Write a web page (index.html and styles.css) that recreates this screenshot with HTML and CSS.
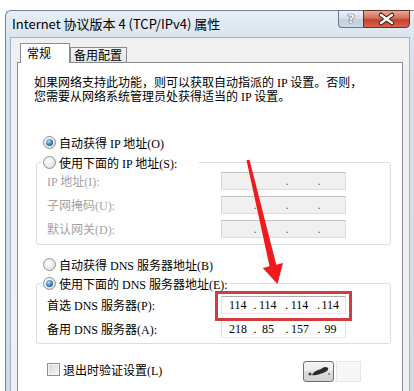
FILE: index.html
```html
<!DOCTYPE html>
<html lang="zh-CN">
<head>
    <meta charset="UTF-8">
    <meta name="viewport" content="width=device-width, initial-scale=1.0">
    <title>Internet 协议版本 4 (TCP/IPv4) 属性</title>
    <link rel="stylesheet" href="styles.css">
</head>
<body>
    <div class="window">
        <div class="titlebar">
            <span class="title">Internet 协议版本 4 (TCP/IPv4) 属性</span>
            <div class="caption">
                <span class="btn-help">?</span>
                <span class="btn-close">
                    <svg width="45" height="16" viewBox="0 0 45 16">
                        <path d="M17 4 L28 12 M28 4 L17 12" stroke="#3b1510" stroke-width="4.5" stroke-linecap="round"/>
                        <path d="M17 4 L28 12 M28 4 L17 12" stroke="#fff" stroke-width="2.6" stroke-linecap="round"/>
                    </svg>
                </span>
            </div>
        </div>
        <div class="client">
            <div class="tabs">
                <div class="tab active">常规</div>
                <div class="tab">备用配置</div>
            </div>
            <div class="page">
                <p class="intro">如果网络支持此功能，则可以获取自动指派的 IP 设置。否则，<br>您需要从网络系统管理员处获得适当的 IP 设置。</p>

                <div class="opt first"><span class="radio checked"></span>自动获得 IP 地址(O)</div>
                <fieldset class="group ip-group">
                    <legend class="opt"><span class="radio"></span>使用下面的 IP 地址(S):</legend>
                    <div class="row off">
                        <span class="label">IP 地址(I):</span>
                        <span class="ipbox off"><span class="seg"></span><span class="dot">.</span><span class="seg"></span><span class="dot">.</span><span class="seg"></span><span class="dot">.</span><span class="seg"></span></span>
                    </div>
                    <div class="row off">
                        <span class="label">子网掩码(U):</span>
                        <span class="ipbox off"><span class="seg"></span><span class="dot">.</span><span class="seg"></span><span class="dot">.</span><span class="seg"></span><span class="dot">.</span><span class="seg"></span></span>
                    </div>
                    <div class="row off">
                        <span class="label">默认网关(D):</span>
                        <span class="ipbox off"><span class="seg"></span><span class="dot">.</span><span class="seg"></span><span class="dot">.</span><span class="seg"></span><span class="dot">.</span><span class="seg"></span></span>
                    </div>
                </fieldset>

                <div class="opt dns-auto"><span class="radio"></span>自动获得 DNS 服务器地址(B)</div>
                <fieldset class="group dns-group">
                    <legend class="opt"><span class="radio checked"></span>使用下面的 DNS 服务器地址(E):</legend>
                    <div class="row">
                        <span class="label">首选 DNS 服务器(P):</span>
                        <span class="ipbox"><span class="seg">114</span><span class="dot">.</span><span class="seg">114</span><span class="dot">.</span><span class="seg">114</span><span class="dot">.</span><span class="seg">114</span></span>
                    </div>
                    <div class="row">
                        <span class="label">备用 DNS 服务器(A):</span>
                        <span class="ipbox"><span class="seg">218</span><span class="dot">.</span><span class="seg">85</span><span class="dot">.</span><span class="seg">157</span><span class="dot">.</span><span class="seg">99</span></span>
                    </div>
                </fieldset>

                <div class="foot">
                    <span class="check-opt"><span class="checkbox"></span>退出时验证设置(L)</span>
                    <span class="buttons">
                        <span class="btn-smudge">
                            <svg width="29" height="19" viewBox="0 0 29 19">
                                <path d="M8 13 C10 9 14 8 17 7 C19 5 22 4 24 6 C25 8 22 10 19 11 C15 12 12 14 8 13 Z" fill="#2b2b2b"/>
                                <circle cx="6" cy="12" r="1.6" fill="#444"/>
                                <circle cx="25" cy="12" r="1" fill="#777"/>
                            </svg>
                        </span>
                        <span class="btn-ghost"></span>
                    </span>
                </div>

                <svg class="overlay" width="414" height="391" viewBox="0 0 414 391">
                    <rect x="216.5" y="292.5" width="134" height="27" fill="none" stroke="#d23c3e" stroke-width="3"/>
                    <polygon points="246.5,160.3 249.5,159.7 276.3,264.7 283,263 277.5,284 262.8,268 269.5,266.3" fill="#f2191c"/>
                </svg>
            </div>
        </div>
    </div>
</body>
</html>
```

FILE: styles.css
```css
body {
    margin: 0;
    width: 414px;
    height: 391px;
    overflow: hidden;
    background: #fff;
    font-family: "Liberation Serif", "Noto Sans CJK SC", serif;
    font-size: 12px;
    color: #000;
}
.window {
    display: flex;
    flex-direction: column;
    margin: 10px 0 0 5px;
    width: 409px;
    height: 381px;
    box-sizing: border-box;
    border: 1px solid #71839b;
    border-right: none;
    border-bottom: none;
    border-radius: 6px 0 0 0;
    background: linear-gradient(#e6edf5, #d5e1ee 40px, #cfdbe9);
}
.titlebar {
    display: flex;
    flex: none;
    height: 26px;
    padding: 0 4px 0 6px;
}
.title {
    font-family: "Noto Sans CJK SC", sans-serif;
    font-size: 13px;
    line-height: 16px;
    padding-top: 5px;
}
.caption {
    display: flex;
    margin-left: auto;
    margin-top: -1px;
    height: 18px;
}
.btn-help {
    width: 25px;
    height: 18px;
    box-sizing: border-box;
    border: 1px solid #66778f;
    border-right: none;
    border-radius: 0 0 0 4px;
    background: linear-gradient(#eef3f9, #d4dde9 50%, #c3cfdf 50%, #cbd7e6);
    color: #f6f8fb;
    font-family: "DejaVu Sans", sans-serif;
    font-weight: bold;
    font-size: 13px;
    line-height: 16px;
    text-align: center;
    text-shadow: 0 0 1px #44526a, 0 0 1px #44526a, 0 0 1px #44526a;
}
.btn-close {
    width: 47px;
    height: 18px;
    box-sizing: border-box;
    border: 1px solid #6b3026;
    border-radius: 0 0 4px 0;
    background: linear-gradient(#e9a895, #d46d57 45%, #c4412b 55%, #d4654c);
}
.btn-close svg {
    display: block;
}
.client {
    display: flex;
    flex-direction: column;
    flex: 1;
    min-height: 0;
    margin: 0 4px;
    border: 1px solid #a3b3c6;
    border-bottom: none;
    background: #f0f0f0;
    padding: 5px 6px 0;
}
.tabs {
    display: flex;
    flex: none;
    align-items: flex-end;
    height: 19px;
    padding-left: 3px;
}
.tab {
    box-sizing: border-box;
    height: 15px;
    width: 57px;
    padding-left: 3px;
    border: 1px solid #898c95;
    border-bottom: none;
    line-height: 13px;
    background: linear-gradient(#f5f5f5, #e4e4e4);
    font-family: "Noto Sans CJK SC", sans-serif;
}
.tab.active {
    position: relative;
    z-index: 1;
    width: 50px;
    height: 20px;
    margin-bottom: -1px;
    padding-left: 6px;
    line-height: 18px;
    background: #fff;
}
.page {
    position: relative;
    flex: 1;
    min-height: 0;
    border: 1px solid #898c95;
    border-bottom: none;
    background: #fff;
    padding: 13px 0 0 16px;
}
.intro {
    margin: 0;
    line-height: 14px;
    white-space: nowrap;
}
.opt {
    display: flex;
    align-items: center;
    height: 19px;
    white-space: nowrap;
}
.opt.first {
    margin: 29px 0 0 9px;
}
.opt.dns-auto {
    margin: 10px 0 0 9px;
}
.radio {
    position: relative;
    width: 13px;
    height: 13px;
    box-sizing: border-box;
    margin-right: 3px;
    border: 1px solid #8c8f94;
    border-radius: 50%;
    background: radial-gradient(circle at 40% 35%, #fff, #d8d8d8);
}
.radio.checked::after {
    content: "";
    position: absolute;
    left: 2px;
    top: 2px;
    width: 7px;
    height: 7px;
    border-radius: 50%;
    background: radial-gradient(circle at 40% 35%, #b4dcf8, #2f72b0 60%, #123f6b);
}
.group {
    margin: 1px 0 0 2px;
    width: 355px;
    min-width: 0;
    box-sizing: border-box;
    border: 1px solid #d5dfe5;
    border-radius: 3px;
    padding: 0 5px 6px;
}
.group legend {
    padding: 0;
}
.group legend .radio {
    margin-left: 1px;
}
.ip-group legend {
    padding-right: 22px;
}
.dns-group {
    margin-top: 0;
    padding-bottom: 5px;
}
.dns-group legend {
    padding-right: 3px;
}
.dns-group .row:first-of-type {
    margin-top: 3px;
}
.row {
    display: flex;
    align-items: center;
    height: 18px;
    margin-left: 5px;
    white-space: nowrap;
}
.row + .row {
    margin-top: 6px;
}
.row.off .label {
    color: #a3a3a3;
}
.label {
    width: 174px;
}
.ipbox {
    display: flex;
    width: 125px;
    height: 18px;
    box-sizing: border-box;
    border: 1px solid;
    border-color: #abadb3 #dbdfe6 #e3e9ef #e2e3ea;
    background: #fff;
    line-height: 16px;
    font-family: "Liberation Serif", serif;
    font-size: 12px;
}
.ipbox.off {
    background: #f0f0f0;
    border-color: #c2c2c2 #dadada #dcdcdc #d6d6d6;
    color: #6d6d6d;
}
.seg {
    width: 26px;
    box-sizing: border-box;
    padding-right: 6px;
    text-align: center;
}
.seg:first-child {
    width: 30px;
    padding-left: 7px;
}
.seg:last-child {
    width: auto;
    flex: 1;
}
.dot {
    width: 6px;
    text-align: center;
}
.foot {
    display: flex;
    align-items: flex-start;
    margin-top: 16px;
    padding-right: 41px;
}
.check-opt {
    display: flex;
    align-items: center;
    height: 19px;
    margin-left: 13px;
    white-space: nowrap;
}
.checkbox {
    width: 13px;
    height: 13px;
    box-sizing: border-box;
    margin-right: 3px;
    border: 1px solid #8e8f8f;
    background: linear-gradient(135deg, #d6d6d6, #f7f7f7);
    box-shadow: inset 0 0 0 1px #f4f4f4;
}
.buttons {
    display: flex;
    margin-left: auto;
    margin-top: 1px;
}
.btn-smudge {
    width: 31px;
    height: 21px;
    box-sizing: border-box;
    border: 1px solid #707070;
    border-radius: 3px;
    background: linear-gradient(#f4f4f4, #ebebeb 50%, #dddddd 50%, #d0d0d0);
}
.btn-smudge svg {
    display: block;
}
.btn-ghost {
    width: 25px;
    height: 21px;
    margin-left: 2px;
    box-sizing: border-box;
    border: 1px solid #e6e6e6;
    background: #f7f7f7;
}
.overlay {
    position: absolute;
    left: -18px;
    top: -63px;
    pointer-events: none;
}
```
